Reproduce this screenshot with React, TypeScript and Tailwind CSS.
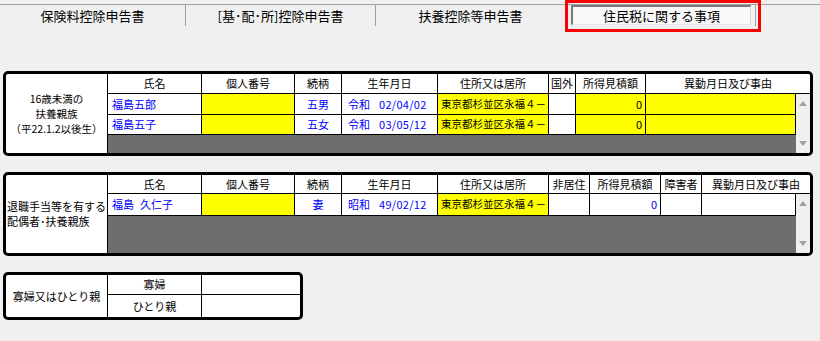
import React from "react";

const Up = () => (
  <div className="w-0 h-0 border-x-[4px] border-x-transparent border-b-[5px] border-b-[#a3a3a3]" />
);
const Down = () => (
  <div className="w-0 h-0 border-x-[4px] border-x-transparent border-t-[5px] border-t-[#a3a3a3]" />
);

function Scroll() {
  return (
    <div className="w-[14px] bg-[#f0f0f0] flex flex-col items-center justify-between pt-[7px] pb-[7px]">
      <Up />
      <Down />
    </div>
  );
}

function H({ children, last }: { children?: React.ReactNode; last?: boolean }) {
  return (
    <div
      className={
        "flex items-center justify-center bg-white text-[11px] leading-none" +
        (last ? "" : " border-r border-black")
      }
    >
      {children}
    </div>
  );
}

function C({
  children,
  y,
  align,
  blue,
}: {
  children?: React.ReactNode;
  y?: boolean;
  align?: "l" | "c" | "r";
  blue?: boolean;
}) {
  const a = align === "c" ? " justify-center" : align === "r" ? " justify-end pr-[3px]" : " justify-start pl-[4px]";
  return (
    <div
      className={
        "flex items-center border-r border-black text-[11px] leading-none whitespace-nowrap overflow-hidden" +
        a +
        (y ? " bg-[#ffff00]" : " bg-white") +
        (blue ? " text-[#0000ff]" : " text-black")
      }
    >
      {children}
    </div>
  );
}

function Addr() {
  return (
    <div className="flex items-center border-r border-black bg-[#ffff00] text-black text-[10.5px] leading-none whitespace-nowrap overflow-hidden pl-[3px]">
      東京都杉並区永福４－
    </div>
  );
}

function DateCell({ era, d }: { era: string; d: string }) {
  return (
    <C blue>
      <span className="pl-[2px]">{era}</span>
      <span className="ml-[9px] tracking-[0.3px]">{d}</span>
    </C>
  );
}

export default function App() {
  return (
    <div className="relative w-[820px] h-[341px] bg-[#f0f0f0] overflow-hidden font-['Noto_Sans_CJK_JP',sans-serif] text-black">
      {/* tab strip */}
      <div className="pt-[4px]">
        <div className="flex h-[22px] border-t border-[#a0a0a0]">
          <div className="w-[186px] h-[21px] border-r border-[#a0a0a0] flex items-center justify-center text-[13px] leading-none">
            保険料控除申告書
          </div>
          <div className="w-[190px] h-[21px] border-r border-[#a0a0a0] flex items-center justify-center text-[13px] leading-none">
            [基･配･所]控除申告書
          </div>
          <div className="w-[190px] h-[21px] border-r border-[#a0a0a0] flex items-center justify-center text-[13px] leading-none">
            扶養控除等申告書
          </div>
          <div className="w-[190px] h-[21px] border-r border-[#a0a0a0] flex items-start">
            <div className="ml-[5px] w-[180px] h-[20px] bg-[#f8f8f8] border-t-2 border-l-2 border-[#7a7a7a] border-r border-b border-r-[#d8d8d8] border-b-[#e8e8e8] flex items-center justify-center text-[13px] leading-none">
              住民税に関する事項
            </div>
          </div>
        </div>
      </div>

      {/* panel 1 */}
      <div className="ml-[3px] mt-[45px] w-[810px] rounded-[5px] border-[3px] border-black bg-white flex overflow-hidden">
        <div className="w-[102px] border-r border-black flex flex-col items-center justify-center text-[10.5px] leading-[15px]">
          <div>16歳未満の</div>
          <div>扶養親族</div>
          <div>（平22.1.2以後生）</div>
        </div>
        <div className="flex-1 flex flex-col">
          <div className="grid grid-cols-[94px_93px_47px_96px_111px_27px_70px_164px] h-[20px] border-b border-black">
            <H>氏名</H>
            <H>個人番号</H>
            <H>続柄</H>
            <H>生年月日</H>
            <H>住所又は居所</H>
            <H>国外</H>
            <H>所得見積額</H>
            <H last>異動月日及び事由</H>
          </div>
          <div className="flex">
            <div className="w-[688px] flex flex-col">
              <div className="grid grid-cols-[94px_93px_47px_96px_111px_27px_70px_150px] h-[21px] border-b border-black">
                <C blue>福島五郎</C>
                <C y />
                <C blue align="c">五男</C>
                <DateCell era="令和" d="02/04/02" />
                <Addr />
                <C />
                <C y align="r">0</C>
                <C y />
              </div>
              <div className="grid grid-cols-[94px_93px_47px_96px_111px_27px_70px_150px] h-[20px] border-b border-black">
                <C blue>福島五子</C>
                <C y />
                <C blue align="c">五女</C>
                <DateCell era="令和" d="03/05/12" />
                <Addr />
                <C />
                <C y align="r">0</C>
                <C y />
              </div>
              <div className="h-[18px] bg-[#6e6e6e]" />
            </div>
            <Scroll />
          </div>
        </div>
      </div>

      {/* panel 2 */}
      <div className="ml-[3px] mt-[16px] w-[810px] rounded-[5px] border-[3px] border-black bg-white flex overflow-hidden">
        <div className="w-[102px] border-r border-black flex flex-col items-start justify-center pl-[1px] text-[11px] leading-[15px] whitespace-nowrap">
          <div>退職手当等を有する</div>
          <div>配偶者･扶養親族</div>
        </div>
        <div className="flex-1 flex flex-col">
          <div className="grid grid-cols-[94px_93px_47px_96px_111px_41px_71px_41px_108px] h-[19px] border-b border-black">
            <H>氏名</H>
            <H>個人番号</H>
            <H>続柄</H>
            <H>生年月日</H>
            <H>住所又は居所</H>
            <H>非居住</H>
            <H>所得見積額</H>
            <H>障害者</H>
            <H last>異動月日及び事由</H>
          </div>
          <div className="flex">
            <div className="w-[688px] flex flex-col">
              <div className="grid grid-cols-[94px_93px_47px_96px_111px_41px_71px_41px_94px] h-[22px] border-b border-black">
                <C blue>
                  <span>福島</span>
                  <span className="ml-[6px]">久仁子</span>
                </C>
                <C y />
                <C blue align="c">妻</C>
                <DateCell era="昭和" d="49/02/12" />
                <Addr />
                <C />
                <C blue align="r">0</C>
                <C />
                <C />
              </div>
              <div className="h-[37px] bg-[#6e6e6e]" />
            </div>
            <Scroll />
          </div>
        </div>
      </div>

      {/* panel 3 */}
      <div className="ml-[3px] mt-[16px] w-[300px] rounded-[5px] border-[3px] border-black bg-white flex overflow-hidden">
        <div className="w-[102px] border-r border-black flex items-center justify-center text-[11px] leading-none">
          寡婦又はひとり親
        </div>
        <div className="w-[94px] border-r border-black flex flex-col">
          <div className="h-[20px] border-b border-black flex items-center justify-center text-[11px] leading-none">
            寡婦
          </div>
          <div className="h-[22px] flex items-center justify-center text-[11px] leading-none">
            ひとり親
          </div>
        </div>
        <div className="flex-1 flex flex-col">
          <div className="h-[20px] border-b border-black" />
          <div className="h-[22px]" />
        </div>
      </div>

      {/* annotation */}
      <div className="absolute left-[565px] top-0 w-[196px] h-[32px] border-[3px] border-[#ff0000]" />
    </div>
  );
}
